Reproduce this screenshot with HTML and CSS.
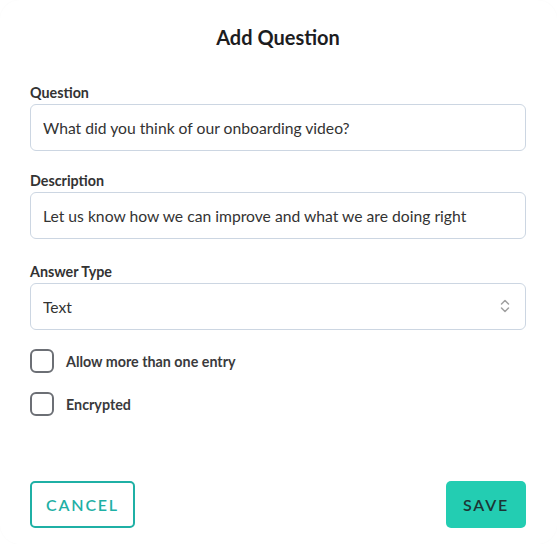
FILE: index.html
```html
<!DOCTYPE html>
<html lang="en">
<head>
  <meta charset="UTF-8">
  <meta name="viewport" content="width=device-width, initial-scale=1.0">
  <title>Add Question</title>
  <link rel="stylesheet" href="styles.css">
</head>
<body>
  <div class="card">
    <h1>Add Question</h1>
    <form id="question-form">
      <div class="field">
        <label for="question">Question</label>
        <input id="question" type="text" value="What did you think of our onboarding video?" />
      </div>

      <div class="field">
        <label for="description">Description</label>
        <input id="description" type="text" value="Let us know how we can improve and what we are doing right" />
      </div>

      <div class="field field-select">
        <label for="answer-type">Answer Type</label>
        <div class="select-wrap">
          <select id="answer-type">
            <option>Text</option>
            <option>Number</option>
            <option>Date</option>
          </select>
          <svg class="select-arrow" width="12" height="16" viewBox="0 0 12 16">
            <path d="M2.5 6 L6 2.5 L9.5 6" />
            <path d="M2.5 10 L6 13.5 L9.5 10" />
          </svg>
        </div>
      </div>

      <div class="checks">
        <label class="check">
          <input type="checkbox" />
          <span class="box"></span>
          Allow more than one entry
        </label>
        <label class="check">
          <input type="checkbox" />
          <span class="box"></span>
          Encrypted
        </label>
      </div>

      <div class="actions">
        <button type="button" class="btn-cancel">Cancel</button>
        <button type="button" class="btn-save">Save</button>
      </div>
    </form>
  </div>
</body>
</html>
```

FILE: styles.css
```css
body {
  margin: 0;
  background-color: #ffffff;
  font-family: Lato, "Open Sans", sans-serif;
  color: #333333;
}
.card {
  background-color: #ffffff;
  border-radius: 20px;
  box-shadow: 0 0 2px rgba(0, 0, 0, 0.03);
  padding: 25px 31px 16px 30px;
  min-height: 503px;
}
h1 {
  margin: 0 0 36px;
  font-size: 20px;
  line-height: 24px;
  font-weight: bold;
  text-align: center;
  color: #1d1d1f;
}
.field {
  margin-bottom: 22px;
}
.field-select {
  padding-top: 3px;
  margin-bottom: 19px;
}
.field label {
  display: block;
  font-size: 14.3px;
  line-height: 16px;
  font-weight: bold;
  color: #333333;
  margin-bottom: 3px;
}
.field input,
.field select {
  box-sizing: border-box;
  width: 100%;
  height: 47px;
  padding: 0 12px;
  border: 1px solid #ccd6e2;
  border-radius: 6px;
  background-color: #ffffff;
  font-family: Lato, sans-serif;
  font-size: 15.7px;
  color: #333333;
  outline: none;
}
.select-wrap {
  position: relative;
}
.field select {
  appearance: none;
  -webkit-appearance: none;
}
.select-arrow {
  position: absolute;
  right: 15px;
  top: 15px;
  fill: none;
  stroke: #a0a0a0;
  stroke-width: 1.5;
  stroke-linecap: round;
  stroke-linejoin: round;
  pointer-events: none;
}
.checks {
  display: flex;
  flex-direction: column;
  gap: 19px;
}
.check {
  display: flex;
  align-items: center;
  gap: 12px;
  font-size: 14.3px;
  font-weight: bold;
  color: #3a3a3c;
}
.check input {
  display: none;
}
.check .box {
  box-sizing: border-box;
  width: 24px;
  height: 24px;
  border: 2px solid #6c6f75;
  border-radius: 6px;
}
.actions {
  display: flex;
  justify-content: space-between;
  margin-top: 65px;
}
.actions button {
  height: 47px;
  border-radius: 5px;
  font-family: Lato, sans-serif;
  font-size: 16px;
  font-weight: 600;
  letter-spacing: 1.8px;
  text-transform: uppercase;
  cursor: pointer;
}
.btn-cancel {
  width: 105px;
  background-color: #ffffff;
  border: 2px solid #1fb0a5;
  color: #1fb0a5;
}
.btn-save {
  width: 80px;
  background-color: #23cdb2;
  border: none;
  color: #1c3535;
}
```
